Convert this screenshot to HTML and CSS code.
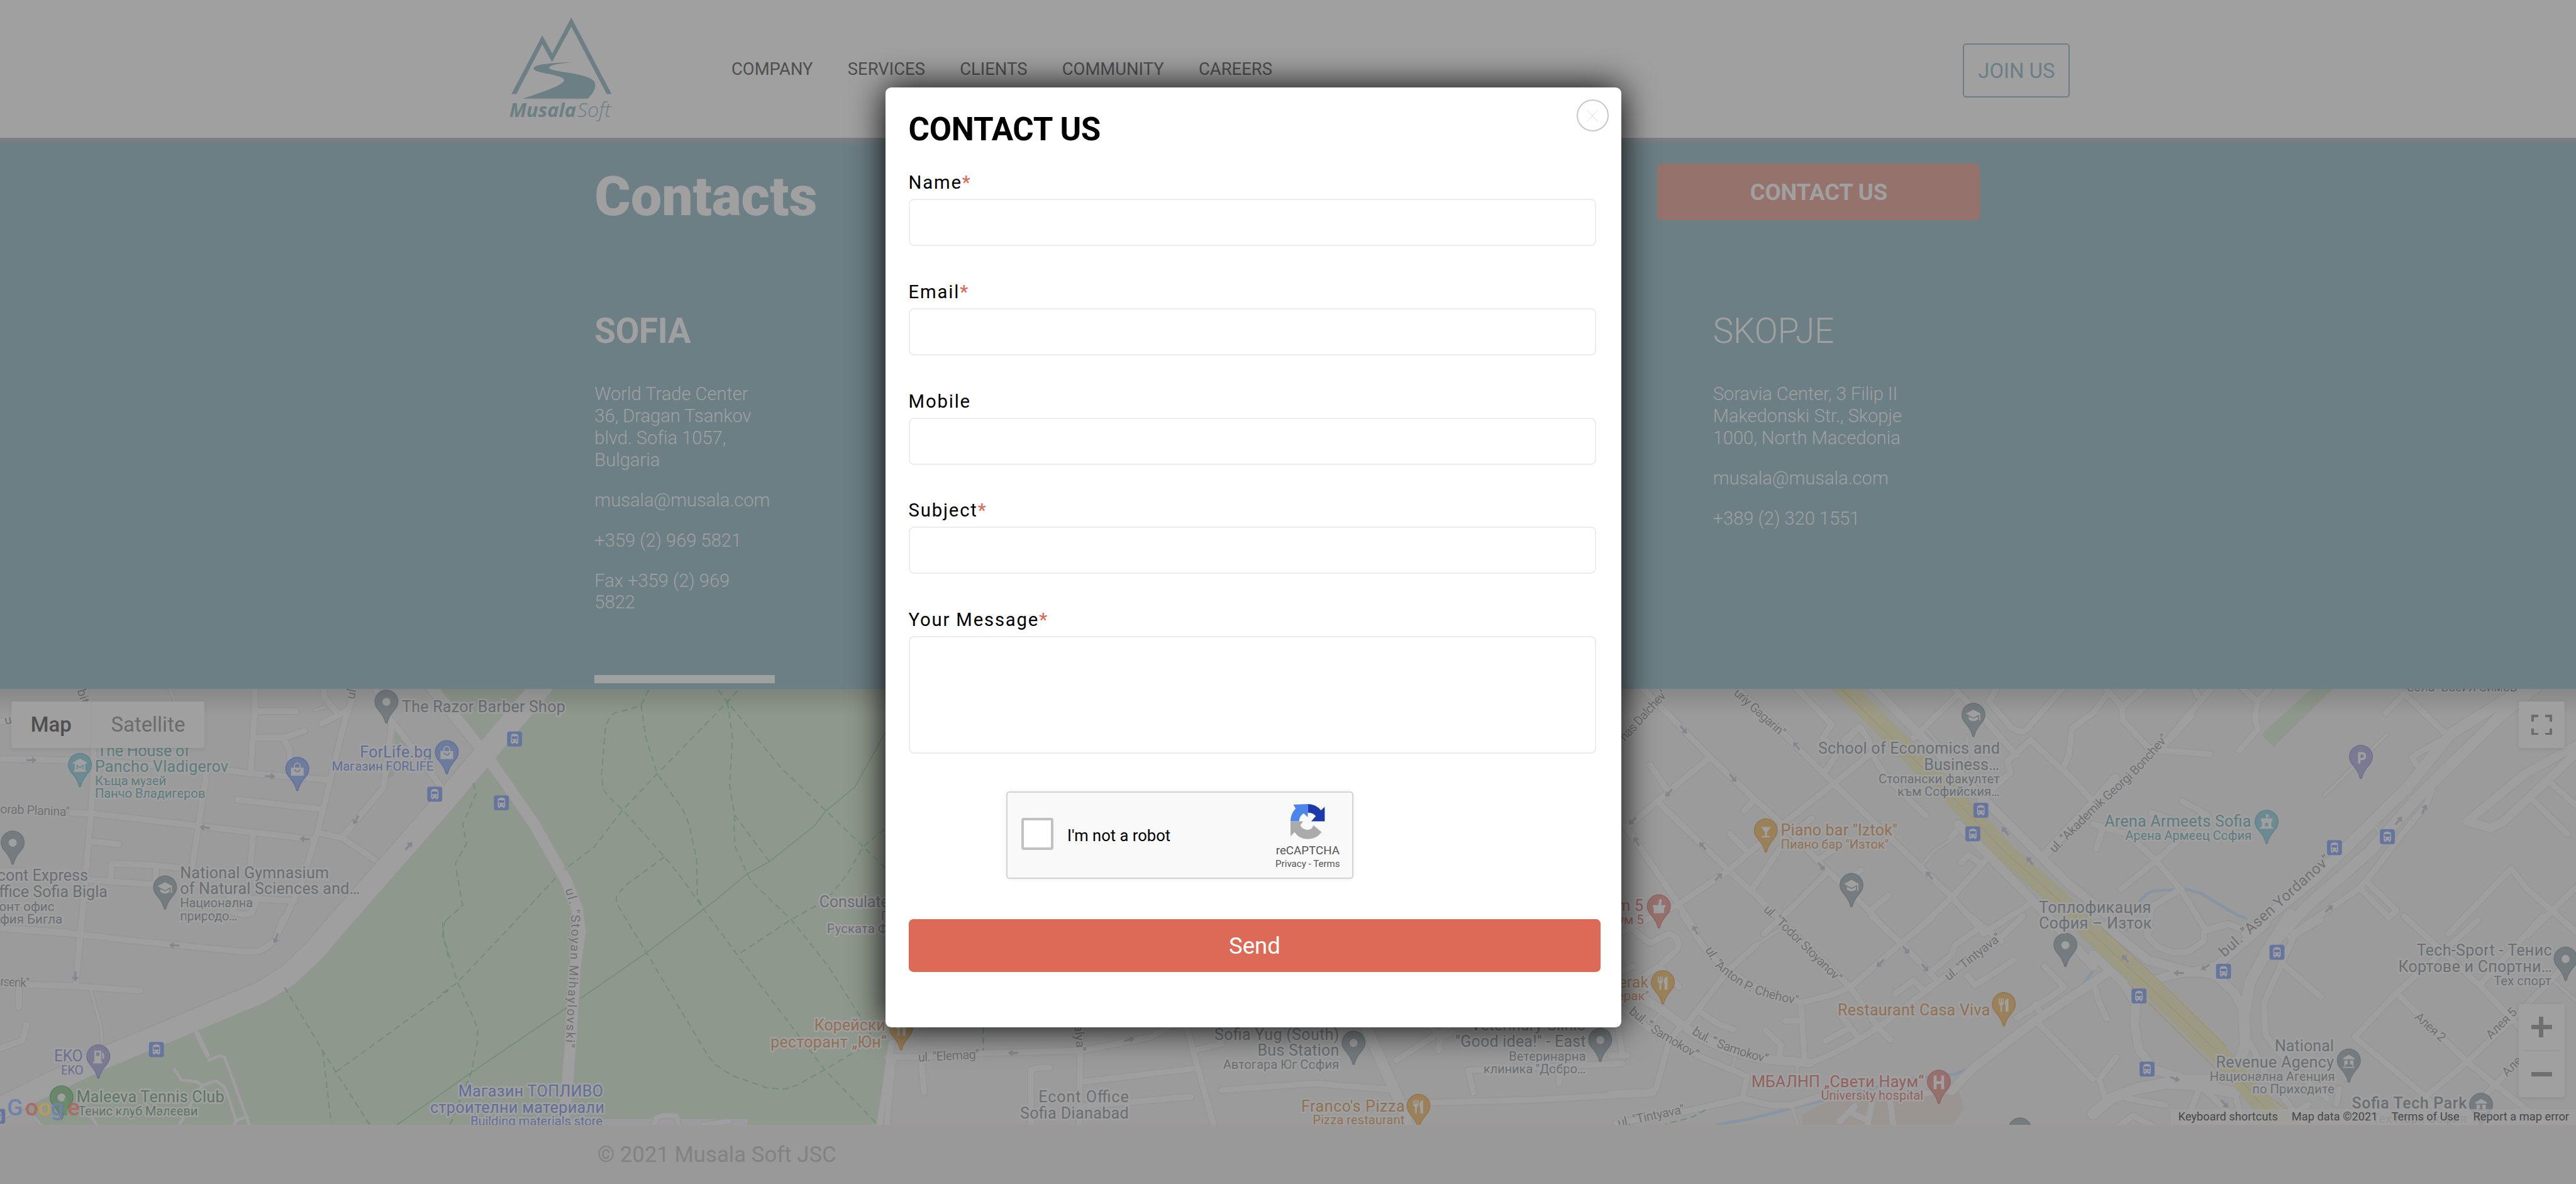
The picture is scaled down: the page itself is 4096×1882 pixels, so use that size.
FILE: index.html
```html
<!DOCTYPE html>
<html lang="en">
<head>
<meta charset="utf-8">
<title>Contacts - Musala Soft</title>
<link rel="stylesheet" href="styles.css">
</head>
<body>
<header class="header">
  <svg class="logo" viewBox="0 0 184 182">
    <g transform="translate(-34.8 -28) scale(.44643 .33333)">
      <path d="M86 489L206 183L245 278L319 90L476 489H457L319 137L244 323L206 230L105 489Z"/>
      <path d="M328 323C240 326 172 335 172 356C172 382 290 385 291 417C290 445 180 490 131 513H384Q413 475 413 440C413 375 235 378 233 352C235 335 290 328 328 323Z"/>
    </g>
    <text x="0" y="175.500" textLength="116" lengthAdjust="spacingAndGlyphs" class="logo-bold">Musala</text>
    <text x="118" y="175.500" textLength="59" lengthAdjust="spacingAndGlyphs" class="logo-light">Soft</text>
  </svg>
  <nav class="nav"><a>COMPANY</a><a>SERVICES</a><a>CLIENTS</a><a>COMMUNITY</a><a>CAREERS</a></nav>
  <a class="join">JOIN US</a>
</header>

<main class="hero">
  <div class="hero-top">
    <h1>Contacts</h1>
    <a class="contact-btn">CONTACT US</a>
  </div>
  <div class="cities">
    <section class="city active">
      <h2>SOFIA</h2>
      <p>World Trade Center<br>36, Dragan Tsankov<br>blvd. Sofia 1057,<br>Bulgaria</p>
      <p>musala@musala.com</p>
      <p>+359 (2) 969 5821</p>
      <p>Fax +359 (2) 969<br>5822</p>
    </section>
    <section class="city">
      <h2>SKOPJE</h2>
      <p>Soravia Center, 3 Filip II<br>Makedonski Str., Skopje<br>1000, North Macedonia</p>
      <p>musala@musala.com</p>
      <p>+389 (2) 320 1551</p>
    </section>
  </div>
</main>

<section class="map">
<svg class="map-canvas" viewBox="0 1198 4480 758">
  <defs>
    <linearGradient id="shade" x1="0" y1="0" x2="0" y2="1"><stop offset="0" stop-color="#000" stop-opacity=".13"/><stop offset="1" stop-color="#000" stop-opacity="0"/></linearGradient>
    <path id="pin" d="M0 0C11 0 20 9 20 20.500C20 34 5 38 1.500 57Q0 59 -1.500 57C-5 38 -20 34 -20 20.500C-20 9 -11 0 0 0Z"/>
    <circle id="g-dot" cy="20.500" r="7"/>
    <path id="g-cap" d="M0 11L13 18L0 25L-13 18ZM-8 23L0 27L8 23V28Q0 34 -8 28ZM10 19H12V30H10Z"/>
    <path id="g-fork" d="M-9 10V18Q-9 21 -6 22V33H-3V22Q0 21 0 18V10H-2V17H-3.500V10H-5.500V17H-7V10ZM3 33V22H2V15Q4 10 8 10V33Z"/>
    <g id="g-bag"><path d="M-11 18H11V32H-11Z"/><path d="M-5 19V15A5 5 0 0 1 5 15V19" class="bag-handle"/></g>
    <path id="g-bank" d="M0 10L10 16V18H-10V16ZM-8 20H-2V27H-8ZM2 20H8V27H2ZM-8 27H-6V30H-8ZM6 27H8V30H6ZM-10 31H10V33H-10Z"/>
    <path id="g-arrow" d="M-9 -1.800H1V-6L9 0L1 6V1.800H-9Z"/>
    <g id="bus"><rect x="-13" y="-13" width="26" height="26" rx="4" fill="#65759d"/><path fill="#a0a0a0" d="M-6.500 -5Q-6 -9 0 -9Q6 -9 6.500 -5V7H5V9H2.500V7H-2.500V9H-5V7H-6.500Z"/><path fill="#65759d" d="M-5 -4.500H5V0H-5ZM-4.500 2H-2.500V4.500H-4.500ZM2.500 2H4.500V4.500H2.500Z"/></g>

    <g id="roads">
      <path class="w38" d="M945 1190L842 1312L770 1397L680 1500L585 1608L545 1655L500 1697L455 1725L300 1790L175 1842L60 1897L-20 1938"/>
      <g transform="translate(0 1180) scale(.49745 .33333)">
        <path d="M0 418L330 430L800 480L880 495L1155 530M325 360L330 430L318 700L282 1330M890 40V170L876 490M895 170H1035M890 310H990L1065 272M990 310L1012 370L1015 440M1245 40L1200 250L1155 530L1110 800L1050 1080L975 1320M722 495L680 900L670 1000M250 700L330 705L700 770L1100 840M830 632L1125 682M325 850L415 865M1115 805L1195 830L1310 945M1195 830L1340 570L1370 240L1310 40M1370 220L1540 560M885 815L870 1060M310 1050L540 1075M387 1040L392 965L545 975V1060M545 975L640 990M800 1140L1030 1160M905 1140L880 1220Q850 1240 815 1220L810 1150M0 1005H80M0 1300L240 1325M1130 40L1135 100L1185 190L1215 160M1185 190L1125 235M0 225L40 215"/>
        <path class="w4" d="M1135 150L1100 165M590 40L610 120"/>
        <path class="w20" d="M1500 30L1700 400L1868 760L1978 1050L2018 1200L2028 1320L2010 1510L1995 1900L1973 2300"/>
      </g>
      <g transform="translate(0 1600) scale(.49745 .33333)">
        <path d="M0 42L280 75L450 105L850 165L905 163Q950 130 965 90L990 -10M285 0L265 335M60 335L260 345L490 368M66 360V455M0 670L80 625L92 545"/>
        <path class="w4" d="M318 370L352 550L357 640M730 730L768 708L785 715L872 1068M610 780L635 835L685 842L708 862L755 838L785 870L800 930L825 1045L818 1068M825 1045L865 1025M708 862L690 900L630 1060M320 1030L345 1080M120 1030L150 1080"/>
        <path class="w8" d="M688 590L725 705"/>
        <path class="w8" d="M2283 1080L2295 1030L2325 1018L2365 1022L2375 1080M2460 1065L2550 1050"/>
        <path d="M3118 640L3074 1080"/>
      </g>
      <g transform="translate(1500 1000) scale(.89286 .57398)">
        <path d="M50 1460H100L240 1448L430 1440L560 1400L620 1350M60 1460L45 1700M115 1480L120 1568M425 1350L422 1700M430 1535L645 1495M328 1700V1500Q340 1490 365 1492M628 1350L690 1700M645 1440L700 1420M1100 1350L1125 1400L1150 1385M1125 1400L1122 1440M1040 1470L1160 1350M1180 1500L1480 1480M1470 1350L1480 1455M1180 1500L1190 1568M1357 1490V1540M422 1610L640 1580M700 1560L880 1540L1040 1560M1060 1600L1300 1590L1540 1570"/>
        <path class="w20" d="M975 1350L1045 1590L1070 1700"/>
      </g>
      <g transform="translate(2800 1180) scale(.53571 .33333)">
        <path d="M100 40L325 410L470 630L560 760L700 990L840 1210L900 1320M325 410L190 590L60 770M130 450L190 590M50 770L220 1170L280 1320M160 650L385 1000L460 1110L590 1320M40 1320L220 1180L385 1000L560 760L725 550L840 400M420 60L725 545L870 770L1110 1140L1215 1330M600 40L720 240L690 310L720 350M760 320L810 250L840 320L860 420L900 520L1025 715M810 250L760 340L700 480M470 630L435 690M655 730L590 810M390 810L450 910M550 890L500 1010L460 1100M740 880L680 940M705 1010L600 1180L500 1330M815 1000L780 1040M905 1130L845 1210M1230 930L1110 1140L985 1330M1125 90L985 310M1110 40L1220 220L1320 400M1140 960L1165 920L1205 970M1105 830L1140 770L1230 930M1470 50L1350 270Q1330 290 1300 250L1230 120L1260 40M1568 180L1500 260L1490 400L1470 470L1568 640M1470 480L1365 320L1290 430L1300 490L1200 640M1370 1170L1210 1330"/>
        <path class="w4" d="M1115 830L1050 900L1015 970M1030 270L1150 500M1160 300V500"/>
        <path class="w16" d="M850 40L1400 930L1480 1060L1620 1240M1410 920L1568 650L1640 520M1130 760L1380 1170L1568 1500"/>
      </g>
      <g transform="translate(2800 1600) scale(.53571 .33333)">
        <path d="M235 -30L300 130Q400 340 620 430L720 390L780 350L945 120L1045 -10M540 -20L780 350L870 560L910 625M850 -20L945 120L1065 320M1170 -20L1270 110M1340 -20L1250 120L1065 320L880 550L810 620L720 700L650 745M1200 40L1120 130L1110 180L1050 260M1065 320L1020 370L985 315L925 385M620 430L632 745M475 130L385 260L250 540M285 470L350 540L400 570M40 460L130 570L290 710L445 815L430 930L520 965H590L680 920M430 930L240 1000L20 1060M570 525H620M505 575L555 650L550 710M700 630L780 560L810 620M745 490L775 550M0 705H55M235 540L190 640L150 880L130 895L0 905M60 30L130 120L190 70Q230 90 220 150L160 240L225 350M0 300L75 240M160 240L110 290M1160 290L1185 340L1310 210M1410 240L1475 350L1430 400L1320 510M1380 440L1400 490M745 1050L795 970M780 1000L830 1040M850 950L835 1080M910 950L920 1080M1385 530L1460 650L1568 830M1100 890L1000 905"/>
        <path class="w4" d="M475 130L550 50M165 480L140 530M405 720L398 775M608 760V800M590 970L610 1068"/>
        <path class="w16" d="M650 745L500 725Q400 700 280 600L170 470L80 380M1620 270L1385 520L1180 770L1110 890"/>
      </g>
      <g transform="translate(3640 1180) scale(.53571 .33333)">
        <path d="M35 40L95 150V215L180 360L225 375L380 395M95 150L165 50M45 85L0 180M390 40L310 190L215 375M325 40L340 90M320 195L220 370M485 50L535 120L575 50M535 120L525 200L535 265L475 375M1010 80L950 180M1010 80L1140 280L1150 310L1120 330L1035 410L1050 450M1100 580L1085 650L980 860L890 1050L860 1100L650 1330M890 1060L985 1210L960 1245L870 1100M1475 530L1568 660M1420 620L1540 810M1358 990L1155 1330M1358 990L1410 1100L1575 1330M1568 1090L1410 1340M0 760L110 810L205 950L285 1100L365 1310L440 1280L500 1320M30 790L10 890M205 950L90 1100M205 950L370 710L290 640M190 700L300 760M285 1100L190 1190L180 1330"/>
        <path class="w4" d="M955 290L750 610M910 760L930 800"/>
        <path class="w16" d="M1568 350L1400 500L1215 745L1290 780L1330 750L1568 390"/>
        <path class="w20" d="M1410 40L1160 290L1020 570L880 790L720 1040L500 1330M1440 40L1320 200L1060 610L900 900L700 1180L590 1370"/>
      </g>
      <g transform="translate(3640 1600) scale(.53571 .33333)">
        <path d="M180 0L175 80L210 140L260 170L310 165L360 110V60L440 20L500 60M610 220L740 400M985 380L850 610L1080 920L1150 1068M985 380L1215 740L1480 1080M985 380L1250 0M1010 -20L1255 340L1385 560M1215 740L1390 470L1568 180M1080 920L1215 740M1255 340L1460 -20M1300 870L1170 1080M1300 870L1400 700M50 270L0 320L20 430L45 515M75 715L20 830L40 930M110 930L235 965M345 860L440 1000L500 1080M345 880L320 980L290 1080M460 900L490 1080M660 1000L700 960M800 880L790 960M660 60L620 200L555 430L560 600L620 720L700 850L760 930M510 640L560 800L690 1080M80 1080L130 1020L200 1080M740 0L640 90"/>
        <path class="w4" d="M1215 740L1300 870M1490 310L1568 420"/>
        <path class="w16" d="M40 30L180 210L320 270L400 240L560 20M180 330Q300 240 400 290L460 380L490 480M0 180L100 330L140 440L135 550L150 680L200 780L300 830H400L460 790"/>
        <path class="w20" d="M640 -30L580 120L510 320L490 500L495 650L460 800M0 1010L60 930L140 880L240 850L340 860L460 900"/>
      </g>
    </g>
  </defs>

  <rect class="land" y="1198" width="4480" height="758"/>
  <path class="park" d="M755 1198L833 1295L770 1412L617 1600L572 1655L525 1698L472 1733L343 1793L199 1853L134 1880L40 1925L75 1956H1525L1548 1786V1198ZM687 1267L711 1297L697 1297L669 1360L686 1347Z"/>
  <path class="park" d="M4020 1198H4057L3954 1299L3933 1277Z"/>
  <path class="hospital" d="M3135 1956V1937L3175 1917L3255 1910L3405 1893L3416 1927L3397 1956Z"/>
  <path class="walk" d="M984 1946H1300V1956H984Z"/>
  <path class="river" d="M2985 1956L3046 1945L3164 1915L3245 1895L3325 1875L3400 1868L3435 1853M3620 1715L3650 1675M3704 1600L3698 1620M3720 1568Q3736 1550 3747 1549L3800 1546L3827 1553L3892 1592L3908 1598"/>
  <use href="#roads" class="casing"/>
  <use href="#roads" class="fill"/>
  <path class="highway" d="M3196 1185L3400 1388L3485 1480L3582 1566L3640 1625L3736 1713L3860 1833L3920 1905L3975 1965"/>
  <path class="highway-line" d="M3202 1198L3398 1388L3485 1480L3582 1566L3640 1625L3736 1713L3860 1833L3920 1905L3965 1956M3652 1610L3755 1705L3872 1820M3700 1708L3850 1855M3883 1860L3980 1932"/>

  <g class="trail">
    <path d="M495 1717L561 1827L584 1864L643 1956M561 1827L576 1953M584 1864L780 1722M776 1600Q769 1610 772 1633L780 1667"/>
    <g transform="translate(770 1180) scale(.49745 .33333)">
      <path d="M107 545L116 600L70 760L83 860L44 965L69 1185L0 1275V1340L52 1585L110 1780L122 1830L120 1900L100 2055L25 2328M720 60L693 138L655 160L603 178Q575 200 568 270L555 500L560 570L575 610L629 685L775 930L830 1030L913 1205L1030 1442L1335 2040L1513 2315M693 138L710 310L750 497L840 685L862 765L887 940L890 1140L913 1205M1030 65L995 122L750 497L629 685L530 878L425 997M395 1040L220 1320L52 1585L0 1640M963 60L995 122L1185 470L1340 690L1470 877L1548 990M995 122L1013 310L1003 560L1020 712L1018 800L1023 880L1065 1018L1080 1060L1218 1257L1350 1505L1500 1860M1020 712L1142 955M775 930L645 1072L608 1130L606 1155L615 1190L712 1430L930 1975L955 2015L1010 2070L1135 2135L1195 2142L1240 2120L1335 2040L1455 1935M1545 785L1470 877L1410 1030L1355 1130M1305 1185L1218 1257L1030 1442"/>
      <path class="solid" d="M1548 280L1440 567L1338 692L1300 767L1142 955L1065 1018L950 1160L712 1430L480 1670M435 1715L100 2055L-160 2328"/>
    </g>
    <path d="M1710 1786V1827M2966 1930L2942 1943L2896 1955"/>
  </g>

  <g class="arrows">
    <use href="#g-arrow" transform="translate(55 1322)"/><use href="#g-arrow" transform="translate(470 1350)"/><use href="#g-arrow" transform="translate(356 1439) rotate(185)"/><use href="#g-arrow" transform="translate(530 1459) rotate(185)"/><use href="#g-arrow" transform="translate(619 1426) rotate(120)"/><use href="#g-arrow" transform="translate(711 1471) rotate(-50)"/><use href="#g-arrow" transform="translate(303 1644) rotate(185)"/><use href="#g-arrow" transform="translate(480 1632) rotate(110)"/><use href="#g-arrow" transform="translate(131 1698) rotate(90)"/>
    <use href="#g-arrow" transform="translate(1762 1831) rotate(180)"/><use href="#g-arrow" transform="translate(1964 1808) rotate(-15)"/>
    <use href="#g-arrow" transform="translate(2928 1269) rotate(50)"/><use href="#g-arrow" transform="translate(3124 1297) rotate(230)"/><use href="#g-arrow" transform="translate(3014 1353) rotate(50)"/><use href="#g-arrow" transform="translate(2902 1379) rotate(135)"/><use href="#g-arrow" transform="translate(2839 1428) rotate(135)"/><use href="#g-arrow" transform="translate(2846 1463) rotate(240)"/><use href="#g-arrow" transform="translate(2961 1471) rotate(230)"/><use href="#g-arrow" transform="translate(2989 1525) rotate(-45)"/><use href="#g-arrow" transform="translate(3168 1507) rotate(50)"/><use href="#g-arrow" transform="translate(3355 1522) rotate(230)"/><use href="#g-arrow" transform="translate(3487 1445) rotate(230)"/><use href="#g-arrow" transform="translate(3530 1497) rotate(230)"/><use href="#g-arrow" transform="translate(2948 1617) rotate(240)"/><use href="#g-arrow" transform="translate(3270 1675) rotate(135)"/><use href="#g-arrow" transform="translate(3315 1652) rotate(50)"/><use href="#g-arrow" transform="translate(3348 1683) rotate(50)"/>
    <use href="#g-arrow" transform="translate(4216 1407) rotate(-65)"/><use href="#g-arrow" transform="translate(4172 1427) rotate(-50)"/><use href="#g-arrow" transform="translate(4051 1580) rotate(-40)"/><use href="#g-arrow" transform="translate(3696 1667) rotate(230)"/><use href="#g-arrow" transform="translate(3835 1682) rotate(150)"/><use href="#g-arrow" transform="translate(3789 1692) rotate(180)"/><use href="#g-arrow" transform="translate(3783 1876) rotate(20)"/><use href="#g-arrow" transform="translate(3869 1920) rotate(50)"/>
  </g>

  <defs>
    <path id="p-stoyan" d="M983 1547L991 1575Q995 1600 993 1640L990 1690L983 1830"/>
    <path id="p-todor" d="M3066 1583L3194 1708L3230 1740"/>
    <path id="p-anton" d="M2965 1651Q2975 1670 2985 1683Q3010 1705 3030 1717Q3070 1740 3160 1752"/>
    <path id="p-samo1" d="M2832 1761L2878 1799L2960 1848"/>
    <path id="p-samo2" d="M2942 1797Q2980 1826 3090 1853"/>
    <path id="p-akad" d="M3573 1484L3645 1412L3700 1362Q3735 1330 3790 1262"/>
  </defs>
  <g class="street">
    <text transform="translate(0 1414) rotate(2.400)" textLength="121">orab Planina"</text>
    <text transform="translate(0 1714) rotate(3)" textLength="51">rsenk"</text>
    <text transform="translate(134 1201) rotate(72)">bits</text>
    <text transform="translate(616 1217) rotate(-78)">ul</text>
    <text transform="translate(9 1260) rotate(-10)">u</text>
    <text transform="translate(1597 1846) rotate(-3)" textLength="107">ul. "Elemag"</text>
    <text transform="translate(1868 1783) rotate(84)">alya"</text>
    <text><textPath href="#p-stoyan" textLength="276">ul. "Stoyan Mihaylovski"</textPath></text>
    <text transform="translate(2826 1290) rotate(-47.500)" textLength="110">nas Dalchev'</text>
    <text transform="translate(3014 1207) rotate(42)" textLength="112">uriy Gagarin"</text>
    <text><textPath href="#p-todor" textLength="180">ul. "Todor Stoyanov"</textPath></text>
    <text><textPath href="#p-anton" textLength="196">ul. "Anton P. Chehov"</textPath></text>
    <text><textPath href="#p-samo1" textLength="142">bul. “ Samokov”</textPath></text>
    <text><textPath href="#p-samo2" textLength="142">bul. “ Samokov”</textPath></text>
    <text transform="translate(3389 1706) rotate(-38)" textLength="118">ul. "Tintyava"</text>
    <text transform="translate(2815 1960) rotate(-12)" textLength="118">ul. "Tintyava"</text>
    <text><textPath href="#p-akad" textLength="282">ul. "Akademik Georgi Bonchev"</textPath></text>
    <text class="big" transform="translate(3869 1665) rotate(-42)" textLength="250">bul. "Asen Yordanov"</text>
    <text transform="translate(4198 1770) rotate(42)" textLength="64">Алея 2</text>
    <text transform="translate(4332 1808) rotate(-45)" textLength="66">Алея 5</text>
    <text transform="translate(4360 1873) rotate(-45)">Алея</text>
  </g>

  <g>
    <use href="#bus" x="756" y="1381"/><use href="#bus" x="895" y="1285"/><use href="#bus" x="872" y="1396"/><use href="#bus" x="272" y="1825"/><use href="#bus" x="-4" y="1941"/><use href="#bus" x="3445" y="1409"/><use href="#bus" x="3431" y="1450"/><use href="#bus" x="4060" y="1474"/><use href="#bus" x="4152" y="1455"/><use href="#bus" x="3960" y="1656"/><use href="#bus" x="3867" y="1689"/><use href="#bus" x="3720" y="1732"/><use href="#bus" x="3734" y="1859"/>
  </g>

  <g class="gray poi">
    <use href="#pin" x="672" y="1200"/><use href="#pin" x="22" y="1445"/><use href="#pin" x="287" y="1523"/><use href="#pin" x="2354" y="1793"/><use href="#pin" x="2783" y="1788"/><use href="#pin" x="3432" y="1223"/><use href="#pin" x="3220" y="1519"/><use href="#pin" x="3592" y="1623"/><use href="#pin" x="3513" y="1944"/><use href="#pin" x="4085" y="1824"/><use href="#pin" x="4462" y="1647"/><use href="#pin" x="4315" y="1901"/>
    <text x="699" y="1239" textLength="284">The Razor Barber Shop</text>
    <text x="153" y="1532" class="end">Econt Express</text>
    <text x="187" y="1560.500" class="end">Office Sofia Bigla</text>
    <text x="94.500" y="1584" class="end s">Еконт офис</text>
    <text x="108.500" y="1606" class="end s">София Бигла</text>
    <text x="313" y="1527" textLength="259">National Gymnasium</text>
    <text x="313" y="1555" textLength="313">of Natural Sciences and…</text>
    <text x="313" y="1577.500" textLength="127" class="s">Национална</text>
    <text x="313" y="1600" textLength="100" class="s">природо…</text>
    <text x="1425" y="1578" textLength="121">Consulate</text>
    <text x="1532" y="1600" class="s">П</text>
    <text x="1438" y="1622" class="s" textLength="106">Руската Ф</text>
    <text x="1806" y="1917" textLength="157">Econt Office</text>
    <text x="1774" y="1945" textLength="189">Sofia Dianabad</text>
    <text x="2112" y="1808" textLength="217">Sofia Yug (South)</text>
    <text x="2187" y="1836" textLength="142">Bus Station</text>
    <text x="2127" y="1859" textLength="202" class="s">Автогара Юг София</text>
    <text x="2558" y="1792" textLength="199">Veterinary Clinic</text>
    <text x="2531" y="1820" textLength="227">"Good idea!" - East</text>
    <text x="2624" y="1844" textLength="134" class="s">Ветеринарна</text>
    <text x="2580" y="1866" textLength="178" class="s">клиника "Добро…</text>
    <text x="3162" y="1311" textLength="316">School of Economics and</text>
    <text x="3346" y="1339" textLength="131">Business…</text>
    <text x="3267" y="1362" textLength="211" class="s">Стопански факултет</text>
    <text x="3300" y="1384" textLength="178" class="s">към Софийския…</text>
    <text x="3546" y="1587" textLength="195">Топлофикация</text>
    <text x="3546" y="1615" textLength="196">София – Изток</text>
    <text x="3956" y="1828" textLength="103">National</text>
    <text x="3854" y="1856" textLength="205">Revenue Agency</text>
    <text x="3843" y="1879" textLength="218" class="s">Национална Агенция</text>
    <text x="3917" y="1901" textLength="143" class="s">по Приходите</text>
    <text x="4203" y="1662" textLength="235">Tech-Sport - Тенис</text>
    <text x="4171" y="1690" textLength="267">Кортове и Спортни…</text>
    <text x="4337" y="1713" textLength="100" class="s">Тех спорт</text>
    <text x="4090" y="1928" textLength="200" class="medium">Sofia Tech Park</text>
    <text x="4125" y="1953" textLength="165" class="s">Тех Парк София</text>
    <text x="4186" y="1202" textLength="198" class="s">Зала "Васил Симов"</text>
  </g>
  <g class="teal poi">
    <use href="#pin" x="139" y="1310"/><use href="#pin" x="3942" y="1409"/>
    <text x="169" y="1314.500" textLength="161">The House of</text>
    <text x="165" y="1342.500" textLength="232">Pancho Vladigerov</text>
    <text x="165" y="1365.500" textLength="124" class="s">Къща музей</text>
    <text x="165" y="1387.500" textLength="192" class="s">Панчо Владигеров</text>
    <text x="3660" y="1438" textLength="255">Arena Armeets Sofia</text>
    <text x="3696" y="1461" textLength="220" class="s">Арена Армеец София</text>
  </g>
  <g class="blue poi">
    <use href="#pin" x="517" y="1317"/><use href="#pin" x="777" y="1288"/>
    <text x="626" y="1317" textLength="125">ForLife.bg</text>
    <text x="577" y="1340" textLength="177" class="s">Магазин FORLIFE</text>
    <text x="797" y="1907" textLength="252">Магазин ТОПЛИВО</text>
    <text x="748" y="1935" textLength="303">строителни материали</text>
    <text x="818" y="1957" textLength="230" class="s">Building materials store</text>
  </g>
  <g class="purple poi">
    <use href="#pin" x="171" y="1817"/><use href="#pin" x="4106" y="1296"/>
    <text x="94" y="1846" textLength="50">EKO</text>
    <text x="106" y="1869" textLength="39" class="s">EKO</text>
  </g>
  <g class="green poi">
    <use href="#pin" x="107" y="1888"/>
    <text x="133" y="1917" textLength="257">Maleeva Tennis Club</text>
    <text x="136" y="1940" textLength="208" class="s">Тенис клуб Малееви</text>
  </g>
  <g class="orange poi">
    <use href="#pin" x="1567" y="1768"/><use href="#pin" x="2467" y="1903"/><use href="#pin" x="3071" y="1424"/><use href="#pin" x="2892" y="1688"/><use href="#pin" x="3485" y="1726"/>
    <text x="1416" y="1792" textLength="124">Корейски</text>
    <text x="1340" y="1821" textLength="202">ресторант „Юн“</text>
    <text x="2263" y="1933" textLength="180">Franco's Pizza</text>
    <text x="2283" y="1955" textLength="160" class="s">Pizza restaurant</text>
    <text x="3097" y="1453" textLength="203">Piano bar "Iztok"</text>
    <text x="3097" y="1476" textLength="188" class="s">Пиано бар "Изток"</text>
    <text x="2867" y="1717" class="end">erak</text>
    <text x="2868" y="1739" class="end s">ерак"</text>
    <text x="3196" y="1766" textLength="265">Restaurant Casa Viva</text>
  </g>
  <g class="red poi">
    <use href="#pin" x="2885" y="1556"/><use href="#pin" x="3372" y="1861"/>
    <text x="2858" y="1584" class="end">m 5</text>
    <text x="2859" y="1607" class="end s">ум 5</text>
    <text x="3046" y="1890" textLength="300">МБАЛНП „Свети Наум“</text>
    <text x="3167" y="1912" textLength="178" class="s">University hospital</text>
  </g>
  <g class="glyphs">
    <use href="#g-dot" x="672" y="1200"/><use href="#g-dot" x="22" y="1445"/><use href="#g-dot" x="2354" y="1793"/><use href="#g-dot" x="2783" y="1788"/><use href="#g-dot" x="3592" y="1623"/><use href="#g-dot" x="4462" y="1647"/><use href="#g-dot" x="107" y="1888"/>
    <use href="#g-cap" x="287" y="1523"/><use href="#g-cap" x="3432" y="1223"/><use href="#g-cap" x="3220" y="1519"/>
    <use href="#g-bank" x="4085" y="1824"/><use href="#g-bank" x="4315" y="1901"/>
    <use href="#g-bag" x="517" y="1317"/><use href="#g-bag" x="777" y="1288"/>
    <path class="smile" d="M512 1338Q517 1346 522 1338M772 1309Q777 1317 782 1309"/>
    <use href="#g-fork" x="1567" y="1768"/><use href="#g-fork" x="2467" y="1903"/><use href="#g-fork" x="2892" y="1688"/><use href="#g-fork" x="3485" y="1726"/>
    <path d="M139 1319L151 1326V1328H148V1340H150V1342H128V1340H130V1328H127V1326Z"/>
    <path class="museum" d="M134 1338V1331L139 1335L144 1331V1338"/>
    <path d="M3063 1438H3080L3073 1447V1454H3078V1456H3064V1454H3069.500V1447ZM2874 1574H2884L2886 1564H2890L2889 1574H2897L2894 1580V1588H2876V1580ZM3363 1870H3368V1880H3376V1870H3381V1894H3376V1885H3368V1894H3363ZM3932 1423H3941V1415L3948 1419L3943 1421V1423H3952V1429H3950V1437L3955 1441H3929L3934 1437V1429H3932ZM164 1827H176V1846H178V1849H162V1846H164ZM177 1830L181 1833V1841H178Z"/>
    <path fill="#6b8a91" d="M3939 1437V1432Q3942 1429 3945 1432V1437Z"/>
    <path fill="#7a7b93" d="M167 1830H173V1836H167Z"/>
    <path fill-rule="evenodd" d="M4101 1308H4108Q4115 1308 4115 1315Q4115 1322 4108 1322H4105V1328H4101ZM4105 1312V1318H4108Q4111 1318 4111 1315Q4111 1312 4108 1312Z"/>
  </g>
  <g class="google">
    <text x="12" y="1940" fill="#7083ad">G</text><text x="43.500" y="1940" fill="#a96c68">o</text><text x="65.500" y="1940" fill="#b59a5c">o</text><text x="88" y="1940" fill="#7083ad">g</text><text x="109" y="1940" fill="#6a8f6e">l</text><text x="117" y="1940" fill="#a96c68">e</text>
  </g>
  <rect y="1198" width="4480" height="46" fill="url(#shade)"/>
</svg>
  <div class="map-types"><span class="on">Map</span><span>Satellite</span></div>
  <div class="fullscreen"><svg viewBox="0 0 36 36"><path d="M2 12V2H12M24 2H34V12M34 24V34H24M12 34H2V24"/></svg></div>
  <div class="zoomer"><i class="plus"></i><hr><i class="minus"></i></div>
  <div class="attribution"><span>Keyboard shortcuts</span><span>Map data ©2021</span><span>Terms of Use</span><span>Report a map error</span></div>
</section>

<footer class="footer">© 2021 Musala Soft JSC</footer>

<div class="modal">
  <button class="close" aria-label="Close"><svg viewBox="0 0 20 20"><path d="M0 0L20 20M20 0L0 20"/></svg></button>
  <h2>CONTACT US</h2>
  <form>
    <label>Name<em>*</em></label><div class="input"></div>
    <label>Email<em>*</em></label><div class="input"></div>
    <label>Mobile</label><div class="input"></div>
    <label>Subject<em>*</em></label><div class="input"></div>
    <label>Your Message<em>*</em></label><div class="input area"></div>
    <div class="captcha">
      <span class="box"></span>
      <span class="robot">I'm not a robot</span>
      <div class="brand">
        <svg viewBox="0 0 60 61">
          <path fill="#1c3aa9" d="M30 0Q44 0 53 11L59.500 5V30H36L44 21Q39 15 30 15Z"/>
          <path fill="#4b86ec" d="M30 0V23L23 16Q15 21 15 30H0Q0 17 9 8L5 1Z"/>
          <path fill="#ababab" d="M0 30H22L17 37Q21 45 30 45Q37 45 40 37L54 49Q45 61 30 61Q15 61 7 49L0 56Z"/>
        </svg>
        <b>reCAPTCHA</b>
        <small>Privacy - Terms</small>
      </div>
    </div>
    <button class="send" type="button">Send</button>
  </form>
</div>
</body>
</html>
```
FILE: styles.css
```css
html { font-size: calc(100vw / 44.8); }
* { box-sizing: border-box; }
body {
  margin: 0;
  position: relative;
  height: 100vh;
  overflow: hidden;
  background: #999;
  font-family: Roboto, "Liberation Sans", sans-serif;
}
h1, h2, p { margin: 0; }

/* header */
.header {
  height: 2.4rem;
  padding-left: 8.86rem;
  display: flex;
  align-items: center;
  background: #a0a0a0;
  color: #4f4f4f;
}
.logo { width: 1.84rem; height: 1.82rem; fill: #6c7f85; align-self: flex-start; margin-top: .28rem; overflow: visible; }
.logo text { font-family: "Open Sans", "Noto Sans", sans-serif; font-style: italic; font-size: 34px; }
.logo-bold { font-weight: 700; }
.logo-light { font-weight: 300; }
.nav { display: flex; gap: .605rem; margin-left: 2.02rem; font-size: .3rem; width: 21.42rem; }
.join {
  width: 1.86rem;
  height: .94rem;
  margin-top: .06rem;
  display: flex;
  align-items: center;
  justify-content: center;
  border: .022rem solid #6c7f85;
  border-radius: .06rem;
  color: #6c7f85;
  font-size: .36rem;
}

/* hero */
.hero {
  height: 9.58rem;
  padding: .44rem 0 .1rem 10.34rem;
  display: flex;
  flex-direction: column;
  background: linear-gradient(#7c8080, #6c7f85 .12rem);
  color: #a0a0a0;
}
.hero-top { display: flex; height: 2.565rem; }
h1 { width: 18.485rem; margin-top: .08rem; font-size: .96rem; line-height: 1rem; font-weight: 900; }
.contact-btn {
  width: 5.61rem;
  height: .99rem;
  display: flex;
  align-items: center;
  justify-content: center;
  padding-top: .02rem;
  background: #95736c;
  border-radius: .08rem;
  font-size: .4rem;
  font-weight: 700;
  letter-spacing: -.002rem;
}
.cities { flex: 1; display: flex; gap: 16.31rem; }
.city { width: 3.14rem; display: flex; flex-direction: column; white-space: nowrap; font-size: .32rem; line-height: .38rem; font-weight: 300; letter-spacing: -.001rem; }
.city h2 { font-size: .6rem; line-height: .7rem; font-weight: 300; margin-bottom: .56rem; }
.city.active h2 { font-weight: 700; letter-spacing: -.005rem; }
.city p { margin-bottom: .32rem; }
.city.active::after { content: ""; height: .14rem; margin-top: auto; background: #a0a0a0; }

/* map */
.map { position: relative; height: 7.6rem; border-bottom: .022rem solid #a09895; overflow: hidden; }
.map-canvas { display: block; width: 44.8rem; height: 7.58rem; }
.land { fill: #9b9b9b; }
.park { fill: #8f988c; }
.hospital { fill: #9b9592; }
.walk { fill: #9c9b9f; }
#roads path, .river, .highway, .highway-line, .trail path { fill: none; vector-effect: non-scaling-stroke; stroke-linejoin: round; }
#roads path { --w: .1rem; stroke-width: calc(var(--w) + var(--edge)); stroke-linecap: round; }
#roads .w4 { --w: .045rem; }
#roads .w8 { --w: .08rem; }
#roads .w16 { --w: .15rem; }
#roads .w20 { --w: .19rem; }
#roads .w38 { --w: .37rem; }
.casing { --edge: .034rem; stroke: #969698; }
.fill { --edge: 0rem; stroke: #9f9f9f; }
.river { stroke: #8795a2; stroke-width: .05rem; }
.highway { stroke: #9d9a84; stroke-width: .34rem; }
.highway-line { stroke: #9f9070; stroke-width: .016rem; }
.trail path { stroke: #718d7c; stroke-width: .022rem; stroke-dasharray: .11rem .07rem; }
.trail .solid { stroke-dasharray: none; stroke-width: .018rem; }
.arrows { fill: #86868f; }
.map-canvas text { font-size: 27.500px; stroke: #a0a0a0; stroke-width: 6px; stroke-linejoin: round; paint-order: stroke; }
.map-canvas .s { font-size: 22.500px; }
.map-canvas .end { text-anchor: end; }
.map-canvas .medium { font-weight: 500; }
.map-canvas .street text { font-size: 22px; fill: #707173; stroke-width: 4px; }
.map-canvas .street .big { font-size: 26px; }
.poi use { stroke-width: 1.500px; }
.gray text { fill: #6a6f73; }
.gray use { fill: #757c80; stroke: #6b7378; }
.teal text { fill: #5d7c7e; }
.teal use { fill: #6b8a91; stroke: #5f8087; }
.blue text { fill: #5f6f99; }
.blue use { fill: #6d7b9c; stroke: #60709a; }
.purple text { fill: #6c6f92; }
.purple use { fill: #7a7b93; stroke: #6c6e90; }
.green text { fill: #5c775f; }
.green use { fill: #6a866b; stroke: #5d7c60; }
.orange text { fill: #917153; }
.orange use { fill: #9a8159; stroke: #92754c; }
.red text { fill: #92605d; }
.red use { fill: #95706c; stroke: #8f6360; }
.glyphs { fill: #a0a0a0; }
.bag-handle { fill: none; stroke: #a0a0a0; stroke-width: 2px; }
.smile { fill: none; stroke: #6d7b9c; stroke-width: 2px; }
.museum { fill: none; stroke: #6b8a91; stroke-width: 2px; }
.map-canvas .google text { font-size: 41px; font-weight: 500; stroke: none; }

.map-types {
  position: absolute;
  left: .2rem;
  top: .22rem;
  width: 3.36rem;
  height: .8rem;
  display: flex;
  background: #a0a0a0;
  border-radius: .04rem;
  box-shadow: 0 .02rem .08rem rgba(0, 0, 0, .08);
  font-size: .36rem;
  line-height: .82rem;
  color: #6c6c6c;
}
.map-types span { width: 1.97rem; text-align: center; }
.map-types .on { width: 1.39rem; font-weight: 500; color: #4f4f4f; border-right: .01rem solid #999; }
.fullscreen, .zoomer {
  position: absolute;
  right: .2rem;
  width: .8rem;
  background: #a0a0a0;
  border-radius: .04rem;
  box-shadow: 0 .02rem .08rem rgba(0, 0, 0, .08);
}
.fullscreen { top: .22rem; height: .8rem; padding: .22rem; }
.fullscreen svg { display: block; width: .36rem; height: .36rem; fill: none; stroke: #6c6c6c; stroke-width: 4.500px; }
.zoomer { top: 5.48rem; height: 1.62rem; display: flex; flex-direction: column; align-items: center; justify-content: space-between; padding: .22rem 0; }
.zoomer i { width: .36rem; height: .36rem; background: linear-gradient(#6f6f6f, #6f6f6f) center / .36rem .08rem no-repeat; }
.zoomer .plus { background: linear-gradient(#6f6f6f, #6f6f6f) center / .36rem .08rem no-repeat, linear-gradient(#6f6f6f, #6f6f6f) center / .08rem .36rem no-repeat; }
.zoomer hr { width: .6rem; height: .02rem; margin: 0; border: 0; background: #969696; }
.attribution {
  position: absolute;
  right: 0;
  bottom: 0;
  height: .28rem;
  padding: 0 .12rem 0 .13rem;
  display: flex;
  gap: .24rem;
  background: rgba(160, 160, 160, .75);
  color: #484848;
  font-size: .2rem;
  line-height: .27rem;
}

.footer { padding-left: 10.39rem; font-size: .38rem; line-height: 1rem; color: #828282; }

/* contact dialog */
.modal {
  position: absolute;
  left: 15.4rem;
  top: 1.52rem;
  width: 12.8rem;
  height: 16.34rem;
  padding: .44rem .36rem 0 .4rem;
  background: #fff;
  border-radius: .1rem;
  box-shadow: 0 0 .6rem #000;
  color: #000;
}
.modal h2 { font-size: .56rem; line-height: .6rem; font-weight: 700; letter-spacing: -.003rem; margin-bottom: .43rem; }
.close {
  position: absolute;
  right: .22rem;
  top: .21rem;
  width: .56rem;
  height: .56rem;
  padding: 0;
  display: flex;
  align-items: center;
  justify-content: center;
  background: none;
  border: .022rem solid #c8c8c8;
  border-radius: 50%;
}
.close svg { width: .2rem; height: .2rem; fill: none; stroke: #ddd; stroke-width: 1px; }
.modal label { display: block; font-size: .32rem; line-height: .38rem; letter-spacing: .02rem; margin-bottom: .09rem; }
.modal em { font-style: normal; font-weight: 500; color: #dc6a57; }
.input { width: 11.96rem; height: .82rem; margin-bottom: .61rem; border: .022rem solid #ececec; border-radius: .09rem; }
.area { height: 2.04rem; margin-bottom: .66rem; }
.captcha {
  width: 6.04rem;
  height: 1.52rem;
  margin: 0 0 .7rem 1.7rem;
  padding: 0 .215rem 0 .24rem;
  display: flex;
  align-items: center;
  background: #f9f9f9;
  border: .022rem solid #d3d3d3;
  border-radius: .06rem;
  box-shadow: 0 0 .08rem rgba(0, 0, 0, .08);
}
.box { width: .56rem; height: .56rem; margin-top: -.04rem; background: #fff; border: .044rem solid #c1c1c1; border-radius: .04rem; }
.robot { margin-left: .24rem; padding-top: .02rem; font-size: .28rem; }
.brand { margin-left: auto; padding-top: .06rem; display: flex; flex-direction: column; align-items: center; color: #555; }
.brand svg { width: .6rem; height: .61rem; }
.brand b { font-size: .205rem; line-height: .24rem; font-weight: 400; margin-top: .09rem; }
.brand small { font-size: .165rem; line-height: .2rem; }
.send {
  display: block;
  width: 12.04rem;
  height: .92rem;
  padding: .02rem 0 0;
  border: 0;
  border-radius: .08rem;
  background: #dc6a57;
  color: #fff;
  font: 400 .4rem Roboto, sans-serif;
}
```
